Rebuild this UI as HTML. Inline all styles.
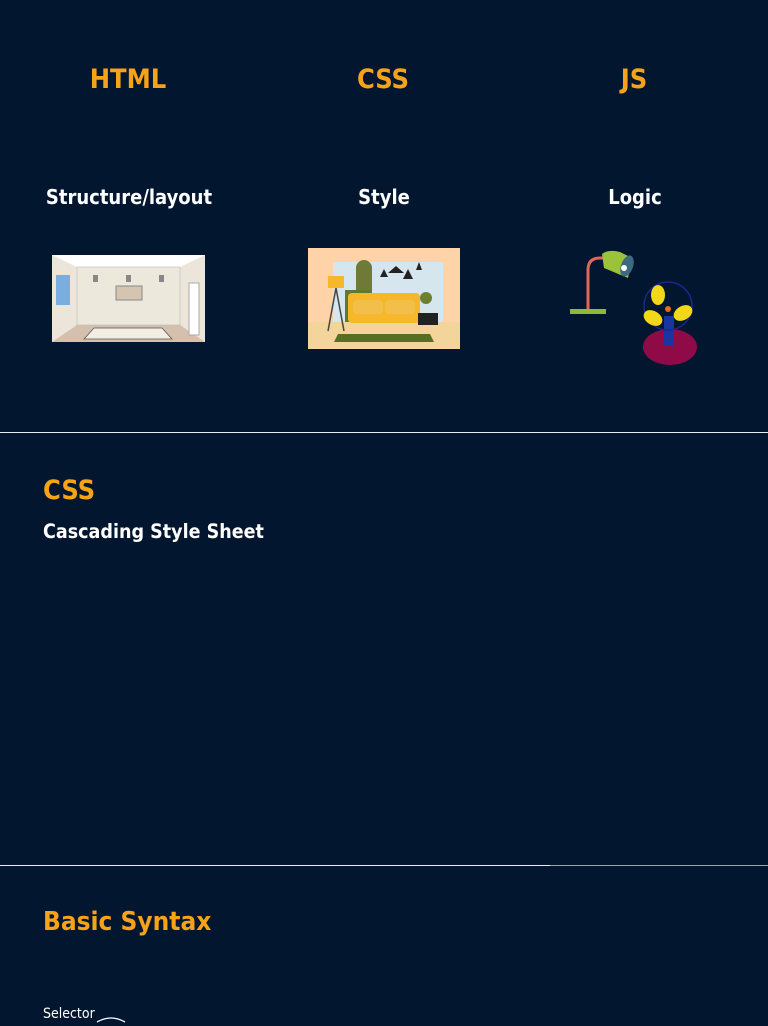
<!DOCTYPE html>
<html><head><style>
body{margin:0;width:768px;height:1024px;background:#03162f;overflow:hidden;position:relative;font-family:"DejaVu Sans Condensed","Liberation Sans",sans-serif;}
.t{position:absolute;font-weight:bold;white-space:nowrap;}
.o{color:#f7a318;}
.w{color:#fff;}
.c{transform:translateX(-50%);}
.hr{position:absolute;left:0;width:768px;height:1px;background:#e8ecf0;}
</style></head><body>
<div class="t o c" style="left:128px;top:64px;font-size:27px">HTML</div>
<div class="t o c" style="left:383px;top:64px;font-size:27px">CSS</div>
<div class="t o c" style="left:634px;top:64px;font-size:27px">JS</div>
<div class="t w c" style="left:129px;top:185px;font-size:20px">Structure/layout</div>
<div class="t w c" style="left:384px;top:185px;font-size:20px">Style</div>
<div class="t w c" style="left:635px;top:185px;font-size:20px">Logic</div>

<svg style="position:absolute;left:52px;top:255px" width="153" height="87" viewBox="0 0 153 87">
<rect width="153" height="87" fill="#ece6da"/>
<polygon points="0,0 153,0 128,12 25,12" fill="#fff"/>
<polygon points="25,70 128,70 153,87 0,87" fill="#d4c0ac"/>
<rect x="25" y="12" width="103" height="58" fill="#ede8dc" stroke="#bbb" stroke-width=".6"/>
<rect x="4" y="20" width="14" height="30" fill="#7aaee0"/>
<rect x="64" y="31" width="26" height="14" fill="#d4c4b0" stroke="#888"/>
<rect x="137" y="28" width="10" height="52" fill="#fff" stroke="#aaa"/>
<polygon points="42,73 110,73 120,84 32,84" fill="#f2eee4" stroke="#555" stroke-width=".8"/>
<rect x="41" y="20" width="5" height="7" fill="#888"/><rect x="74" y="20" width="5" height="7" fill="#888"/><rect x="107" y="20" width="5" height="7" fill="#888"/>
</svg>

<svg style="position:absolute;left:308px;top:248px" width="152" height="101" viewBox="0 0 152 101">
<rect width="152" height="101" fill="#fed3a8"/>
<rect y="74" width="152" height="27" fill="#f3d49a"/>
<rect x="25" y="14" width="110" height="60" fill="#d6e6ee"/>
<path d="M48 74V20a8 8 0 0 1 16 0v54z" fill="#6e7a35"/>
<rect x="37" y="42" width="25" height="32" fill="#5f7a2e"/>
<rect x="40" y="45" width="72" height="30" rx="4" fill="#f6b72a"/>
<rect x="45" y="52" width="30" height="14" rx="4" fill="#f2c04a"/>
<rect x="77" y="52" width="30" height="14" rx="4" fill="#f2c04a"/>
<rect x="20" y="28" width="16" height="12" fill="#f6b72a"/>
<path d="M28 40L20 83M28 40L36 83" stroke="#444" stroke-width="1.5"/>
<rect x="110" y="65" width="20" height="12" fill="#222"/>
<circle cx="118" cy="50" r="6" fill="#6f7f30"/>
<polygon points="30,86 122,86 126,94 26,94" fill="#5a6d22"/>
<path d="M76 21l4 8h-8zM100 21l5 10h-10zM111 14l3 8h-6zM88 18l8 7h-16z" fill="#222"/>
</svg>

<svg style="position:absolute;left:565px;top:248px" width="140" height="125" viewBox="0 0 140 125">
<path d="M23 63V22q0-12 12-12h5" stroke="#e0665a" stroke-width="3" fill="none"/>
<rect x="5" y="61" width="36" height="5" fill="#8db83a"/>
<path d="M37 6q6-5 18-2l12 6 -4 20 -24 -10z" fill="#9cc23a"/>
<ellipse cx="62" cy="18" rx="6" ry="11" transform="rotate(20 62 18)" fill="#3d6a80"/>
<circle cx="59" cy="20" r="3" fill="#fff"/>
<ellipse cx="105" cy="99" rx="27" ry="18" fill="#8e0b48"/>
<rect x="99" y="68" width="10" height="30" fill="#1a35a0"/>
<circle cx="103" cy="58" r="24" fill="none" stroke="#142a8c" stroke-width="1.5"/>
<ellipse cx="93" cy="47" rx="7" ry="10" fill="#f3d81a"/>
<ellipse cx="118" cy="65" rx="7" ry="10" transform="rotate(60 118 65)" fill="#f3d81a"/>
<ellipse cx="88" cy="70" rx="7" ry="10" transform="rotate(-60 88 70)" fill="#f3d81a"/>
<circle cx="103" cy="61" r="3" fill="#f06a10"/>
</svg>

<div class="hr" style="top:432px"></div>
<div class="t o" style="left:43px;top:475px;font-size:27px">CSS</div>
<div class="t w" style="left:43px;top:520px;font-size:19.5px">Cascading Style Sheet</div>
<div class="hr" style="top:865px;width:550px"></div>
<div class="hr" style="top:865px;left:550px;width:218px;background:#9aa3ae"></div>
<div class="t o" style="left:43px;top:907px;font-size:26px">Basic Syntax</div>
<div class="t w" style="left:43px;top:1006px;font-size:14px;font-weight:normal">Selector</div>
<svg style="position:absolute;left:95px;top:1016px" width="40" height="10"><path d="M2 6q14-8 28 0" stroke="#fff" fill="none" stroke-width="1.3"/></svg>
</body></html>
